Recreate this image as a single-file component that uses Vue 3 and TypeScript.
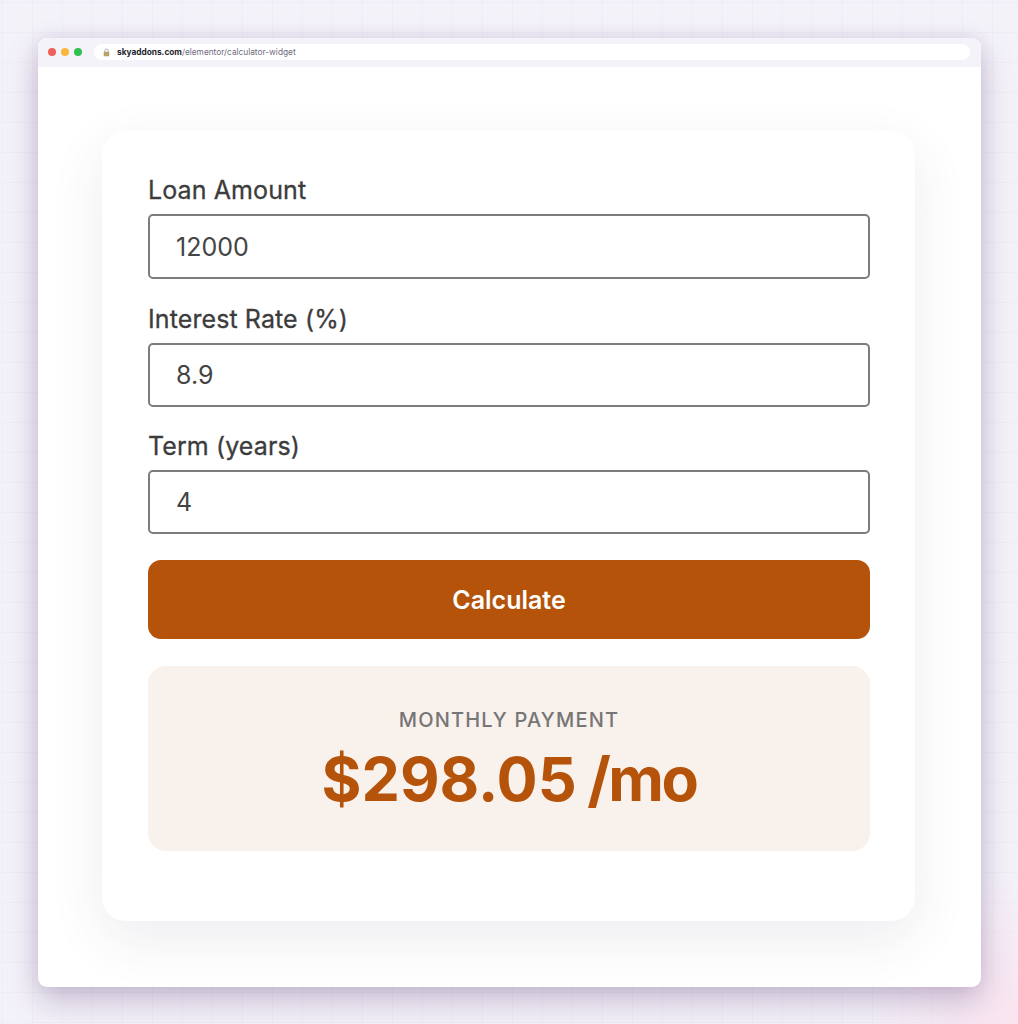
<script setup lang="ts">
const fields: { label: string; value: string; cls: string }[] = [
  { label: 'Loan Amount', value: '12000', cls: 'first' },
  { label: 'Interest Rate (%)', value: '8.9', cls: 'second' },
  { label: 'Term (years)', value: '4', cls: 'third' },
]
</script>

<template>
  <div class="page">
    <div class="window">
      <div class="toolbar">
        <div class="dots">
          <span class="dot red"></span>
          <span class="dot yellow"></span>
          <span class="dot green"></span>
        </div>
        <div class="address">
          <svg class="lock" viewBox="0 0 10 12" width="7" height="9">
            <path d="M2.5 5.5V3.5a2.5 2.5 0 0 1 5 0v2" fill="none" stroke="#a8a8a0" stroke-width="1.3" />
            <rect x="1" y="5" width="8" height="6.5" rx="1" fill="#b5a36a" />
          </svg>
          <span class="url"><b>skyaddons.com</b>/elementor/calculator-widget</span>
        </div>
      </div>
      <div class="content">
        <div class="card">
          <div v-for="f in fields" :key="f.label" class="field" :class="f.cls">
            <label class="label">{{ f.label }}</label>
            <div class="input">{{ f.value }}</div>
          </div>
          <button class="calc" type="button">Calculate</button>
          <div class="result">
            <div class="result-title">MONTHLY PAYMENT</div>
            <div class="result-value">$298.05 <span class="per">/mo</span></div>
          </div>
        </div>
      </div>
    </div>
  </div>
</template>

<style>
html, body { margin: 0; padding: 0; }
</style>

<style scoped>
* { box-sizing: border-box; }
.page {
  width: 1018px;
  height: 1024px;
  overflow: hidden;
  padding: 38px 37px 37px 38px;
  font-family: Inter, "Liberation Sans", sans-serif;
  background-color: #f4f2f9;
  background-image:
    radial-gradient(circle at 100% 100%, rgba(250, 226, 238, 0.9) 0, rgba(250, 226, 238, 0) 150px),
    linear-gradient(rgba(120, 110, 160, 0.035) 1px, transparent 1px),
    linear-gradient(90deg, rgba(120, 110, 160, 0.035) 1px, transparent 1px);
  background-size: 100% 100%, 30px 30px, 30px 30px;
  background-position: 0 0, 0 2px, 2px 0;
}
.window {
  width: 943px;
  height: 949px;
  background: #fff;
  border-radius: 9px;
  display: flex;
  flex-direction: column;
  overflow: hidden;
  box-shadow: 0 14px 32px rgba(85, 55, 115, 0.28), 0 0 16px rgba(85, 55, 115, 0.1);
}
.toolbar {
  height: 29px;
  flex: none;
  background: #f5f3fa;
  display: flex;
  align-items: center;
  padding: 0 11px 1px 10px;
}
.dots { display: flex; gap: 5px; width: 46px; flex: none; align-items: center; }
.dot { width: 8px; height: 8px; border-radius: 50%; }
.red { background: #f0605a; }
.yellow { background: #f8b63e; }
.green { background: #2fc04e; }
.address {
  flex: 1;
  height: 16px;
  background: #fff;
  border-radius: 8px;
  display: flex;
  align-items: center;
  padding-left: 9px;
  gap: 7px;
}
.lock { flex: none; }
.url { font-size: 8.3px; color: #6f6d7e; white-space: nowrap; }
.url b { font-weight: 700; color: #23232b; }
.content {
  flex: 1;
  padding: 64px 65px 0 64px;
}
.card {
  width: 813px;
  height: 790px;
  background: #fff;
  border-radius: 24px;
  padding: 45px 45px 0 46px;
  box-shadow: 0 18px 55px rgba(50, 50, 93, 0.09);
}
.first { margin-bottom: 26px; }
.second { margin-bottom: 25px; }
.third { margin-bottom: 26px; }
.label {
  display: block;
  font-size: 25px;
  line-height: 29px;
  font-weight: 400;
  letter-spacing: 0.1px;
  color: #3c3c3c;
  margin-bottom: 9px;
  -webkit-text-stroke: 0.3px #3c3c3c;
}
.input {
  height: 64px;
  border: 2px solid #7c7c7c;
  border-radius: 5px;
  padding: 0 25px 0 26px;
  display: flex;
  align-items: center;
  font-size: 25px;
  color: #444;
  background: #fff;
}
.first .input { height: 65px; }
.calc {
  display: block;
  width: 100%;
  height: 79px;
  border: 0;
  border-radius: 13px;
  background: #b45309;
  color: #fff;
  font-family: inherit;
  font-size: 25px;
  font-weight: 600;
  margin: 0 0 27px 0;
  padding: 0;
}
.result {
  height: 185px;
  border-radius: 18px;
  background: #f9f1ec;
  display: flex;
  flex-direction: column;
  align-items: center;
  padding-top: 42px;
}
.result-title {
  font-size: 20px;
  line-height: 24px;
  font-weight: 500;
  letter-spacing: 1.2px;
  color: #767676;
}
.result-value {
  font-size: 61px;
  line-height: 75px;
  font-weight: 700;
  word-spacing: -4px;
  color: #b45309;
  margin-top: 10px;
}
.per { letter-spacing: -2.5px; }
</style>
